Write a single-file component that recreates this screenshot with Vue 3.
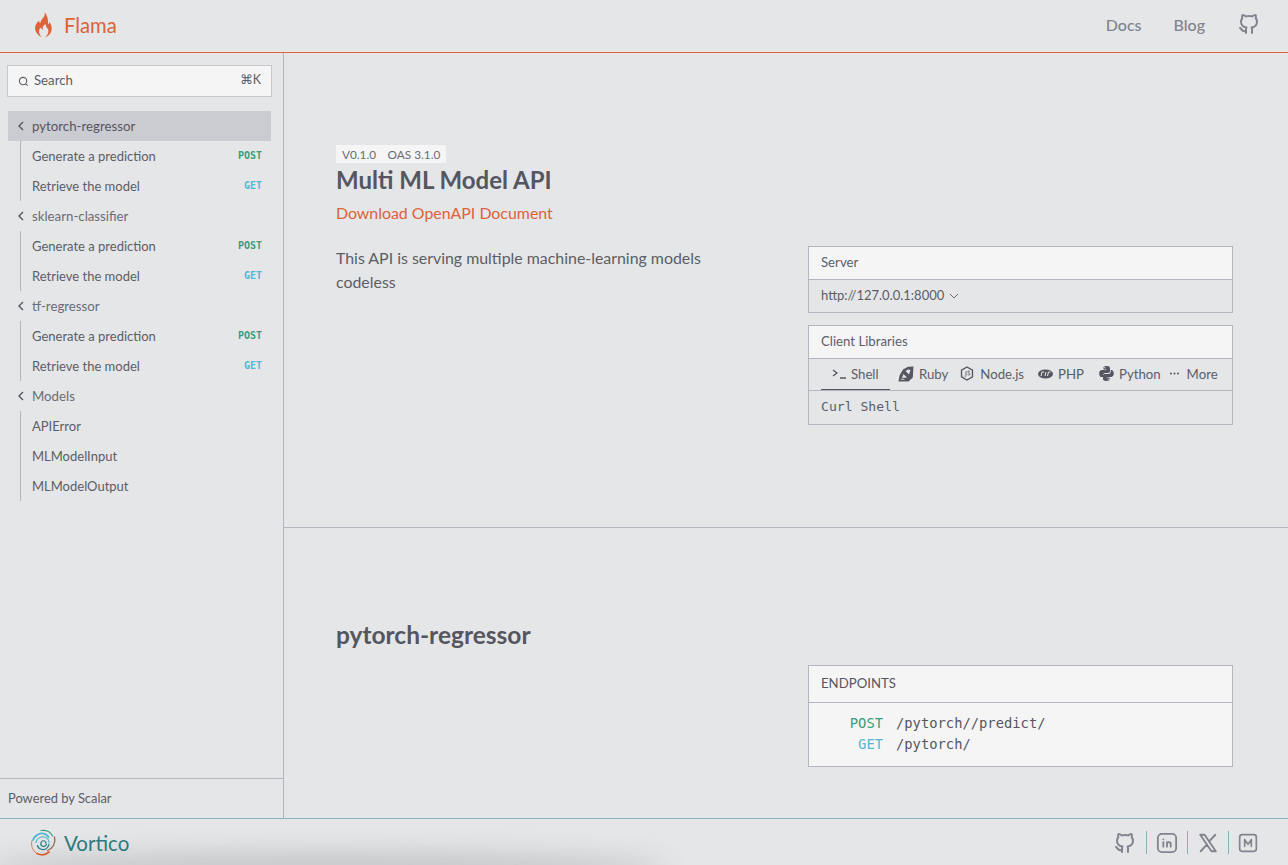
<script setup>
const groups = [
  { name: 'pytorch-regressor', active: true, items: [['Generate a prediction', 'POST'], ['Retrieve the model', 'GET']] },
  { name: 'sklearn-classifier', items: [['Generate a prediction', 'POST'], ['Retrieve the model', 'GET']] },
  { name: 'tf-regressor', items: [['Generate a prediction', 'POST'], ['Retrieve the model', 'GET']] },
  { name: 'Models', items: [['APIError', ''], ['MLModelInput', ''], ['MLModelOutput', '']] },
]
const github = 'M9 19c-4.3 1.4-4.3-2.5-6-3m12 5v-3.5c0-1 .1-1.4-.5-2 2.8-.3 5.5-1.4 5.5-6a4.6 4.6 0 0 0-1.3-3.2 4.2 4.2 0 0 0-.1-3.2s-1.1-.3-3.5 1.3a12.3 12.3 0 0 0-6.2 0C6.5 2.8 5.4 3.1 5.4 3.1a4.2 4.2 0 0 0-.1 3.2A4.6 4.6 0 0 0 4 9.5c0 4.6 2.7 5.7 5.5 6-.6.6-.6 1.2-.5 2V21'
</script>

<template>
  <div class="page">
    <header class="top">
      <div class="brand">
        <svg class="flame" width="20" height="26" viewBox="0 0 20 26">
          <path fill="#dd6237" d="M10.5 0c1 3.2-.6 5-2.3 7C6.800 8.600 6.300 9.800 6.500 11.300 5.400 10.700 5 9.600 5.100 8.400 2.400 10.900.7 13.700 1.100 17c.4 3.600 3 6.300 6.700 8.300-2-2.300-3-4.300-2.700-6.600.2-1.400 1-2.400 2-3.100.1 1.200.7 2 1.600 2.400-.300-2.700.8-4.800 2.800-6.200-.1 2 .9 3.200 1.900 4.500 1.200 1.600 1.400 3.500.4 5.500-.6 1.300-1.500 2.500-2.700 3.600 3.400-1.300 6-3.800 6.500-7.400.4-3-.5-5.500-2.100-7.900-.2 1.100-.7 1.900-1.500 2.500C14.400 8 13.500 3.300 10.500 0z"/>
        </svg>
        <span class="brand-name">Flama</span>
      </div>
      <nav class="top-nav">
        <a>Docs</a>
        <a>Blog</a>
        <svg class="gh" width="24" height="24" viewBox="0 0 24 24"><path :d="github"/></svg>
      </nav>
    </header>

    <div class="body">
      <aside class="side">
        <div class="side-scroll">
          <div class="search">
            <svg width="11" height="11" viewBox="0 0 12 12" class="search-ico"><circle cx="5.500" cy="5.500" r="4"/><path d="M8.500 8.500 10.500 10.500"/></svg>
            <span class="search-label">Search</span>
            <span class="kbd">⌘K</span>
          </div>
          <div class="tree">
            <template v-for="g in groups" :key="g.name">
              <div class="group" :class="{ active: g.active }">
                <svg width="8" height="10" viewBox="0 0 8 10" class="chev"><path d="M6 1 2 5l4 4"/></svg>
                <span>{{ g.name }}</span>
              </div>
              <div class="items">
                <div v-for="it in g.items" :key="it[0]" class="item">
                  <span>{{ it[0] }}</span>
                  <span class="badge" :class="it[1].toLowerCase()">{{ it[1] }}</span>
                </div>
              </div>
            </template>
          </div>
        </div>
        <div class="powered">Powered by Scalar</div>
      </aside>

      <main class="main">
        <section class="intro">
          <div class="tags"><span>V0.1.0</span><span>OAS 3.1.0</span></div>
          <h1>Multi ML Model API</h1>
          <a class="download">Download OpenAPI Document</a>
          <div class="cols top-gap">
            <p class="desc">This API is serving multiple machine-learning models codeless</p>
            <div class="stack">
              <div class="card">
                <div class="card-head">Server</div>
                <div class="card-row">
                  <span>http://127.0.0.1:8000</span>
                  <svg width="10" height="6" viewBox="0 0 10 6" class="down"><path d="M1 1l4 4 4-4"/></svg>
                </div>
              </div>
              <div class="card">
                <div class="card-head">Client Libraries</div>
                <div class="tabs">
                  <div class="tab on">
                    <svg width="16" height="12" viewBox="0 0 16 12"><path class="stroke" d="M1 2l4 3-4 3M8 10h6"/></svg>
                    Shell
                  </div>
                  <div class="tab">
                    <svg width="16" height="16" viewBox="0 0 16 16"><path class="fill" d="M15.500.500 14.800 11.500 10.500 15.500H.500L1.500 9.500 5 3.500 10 .800zM10 3.500 7.500 5 11 8.500 12.500 4zM5.500 8 4 12l5-.5zM2.500 13.500l5 .5-3.500-1.500z"/></svg>
                    Ruby
                  </div>
                  <div class="tab">
                    <svg width="14" height="15" viewBox="0 0 14 15"><path class="stroke" d="M7 1l5.500 3.200v6.600L7 14l-5.500-3.200V4.200z"/><path class="stroke thin" d="M6 5v4.500c0 1-1 1-1.500.7M10 5.500c-1-.7-2.300-.5-2.300.5s2.300.8 2.300 2-1.400 1.300-2.400.6"/></svg>
                    Node.js
                  </div>
                  <div class="tab">
                    <svg width="15" height="10" viewBox="0 0 15 10"><ellipse class="fill" cx="7.500" cy="5" rx="7.500" ry="4.500"/><path d="M3 7l1-4h2M7 7l1-4M9.500 7l1-4h2" stroke="#e5e6e8" stroke-width="1" fill="none"/></svg>
                    PHP
                  </div>
                  <div class="tab">
                    <svg width="15" height="15" viewBox="0 0 15 15"><path class="fill" d="M7.400 0C4.600 0 4.500 1.200 4.500 2v1.500h3v.5H3C1.500 4 .2 5 .2 7.400S1.400 11 2.600 11H4V9.300C4 8 5 7 6.300 7h2.900C10.300 7 11 6.200 11 5V2c0-1.100-1-2-3.600-2zM5.800 1.100a.6.600 0 1 1 0 1.200.6.600 0 0 1 0-1.200z"/><path class="fill" d="M7.600 15c2.800 0 2.900-1.200 2.900-2v-1.500h-3V11H12c1.500 0 2.800-1 2.800-3.400S13.600 4 12.400 4H11.700v1.700C11.700 7 10.700 8 9.400 8H5.800C4.700 8 4 8.800 4 10v3c0 1.100 1 2 3.600 2zm1.600-1.100a.6.600 0 1 1 0-1.200.6.600 0 0 1 0 1.200z"/></svg>
                    Python
                  </div>
                  <div class="tab more">
                    <svg width="9" height="3" viewBox="0 0 9 3"><circle class="fill" cx="1" cy="1.500" r="1"/><circle class="fill" cx="4.500" cy="1.500" r="1"/><circle class="fill" cx="8" cy="1.500" r="1"/></svg>
                    More
                  </div>
                </div>
                <div class="curl">Curl Shell</div>
              </div>
            </div>
          </div>
        </section>

        <section class="tag-section">
          <h2>pytorch-regressor</h2>
          <div class="cols end">
            <div></div>
            <div class="card light">
              <div class="card-head tall">ENDPOINTS</div>
              <div class="endpoints">
                <div class="ep"><span class="verb post">POST</span><span>/pytorch//predict/</span></div>
                <div class="ep"><span class="verb get">GET</span><span>/pytorch/</span></div>
              </div>
            </div>
          </div>
        </section>
      </main>
    </div>

    <footer class="foot">
      <div class="vortico">
        <svg width="28" height="28" viewBox="0 0 28 28" fill="none" stroke-linecap="round">
          <path d="M11 1.500c5-.8 9.500 1.500 11.500 5.500" stroke="#3b9d7d" stroke-width="1.200"/>
          <path d="M24.500 8c1.500 6-1.500 11.500-7 13.500" stroke="#8a6d4c" stroke-width="1.300"/>
          <path d="M19 23c-3.500 3-8 3.500-12 1.500" stroke="#d9622f" stroke-width="1.800"/>
          <path d="M6 24C2 21 .8 16 2 11.500" stroke="#c9805f" stroke-width="1"/>
          <path d="M3 11C4.500 7 9 3.800 13 4.500c2.500.5 4.500 1.700 5.500 3.500" stroke="#48b4d0" stroke-width="1.700"/>
          <path d="M6 13.500C7 9.500 10.500 7.500 14 8c3 .5 5 3 5 6" stroke="#5cb8cc" stroke-width="1.200"/>
          <path d="M19 15.500c-1 3.500-4 5.500-7 5-2.500-.5-4-2-4.500-4" stroke="#2a7d85" stroke-width="1.200"/>
          <path d="M16.500 15.500c-.8 1.500-2.500 2.300-4 1.700-1.500-.7-2-2.300-1.400-3.700.6-1.300 2.200-2 3.500-1.500 1 .4 1.500 1.300 1.300 2.300" stroke="#2a7d85" stroke-width="1.200"/>
        </svg>
        <span>Vortico</span>
      </div>
      <div class="socials">
        <svg width="24" height="24" viewBox="0 0 24 24" class="soc"><path :d="github"/></svg>
        <i></i>
        <svg width="22" height="22" viewBox="0 0 24 24" class="soc"><rect x="2" y="2" width="20" height="20" rx="4.500"/><path d="M8 11v5M8 8v.01M12 16v-5M16 16v-3a2 2 0 0 0-4 0"/></svg>
        <i></i>
        <svg width="22" height="22" viewBox="0 0 24 24" class="soc"><path d="M3.500 3 15.700 21H20.500L8.300 3zM4 21l7-7.500M13 10.500 20 3"/></svg>
        <i></i>
        <svg width="20" height="20" viewBox="0 0 24 24" class="soc"><rect x="2" y="2" width="20" height="20" rx="3"/><path class="m" d="M8 8v8M16 8v8M8 8l4 5.500L16 8"/></svg>
      </div>
    </footer>
  </div>
</template>

<style>
html, body { margin: 0; background: #e5e6e8; overflow: hidden; }
</style>

<style scoped>
.page {
  width: 1288px; height: 865px; display: flex; flex-direction: column;
  background: #e5e6e8; color: #55565f; overflow: hidden;
  font-family: Lato, "Liberation Sans", sans-serif;
}
.top {
  height: 52px; flex: none; box-sizing: content-box; display: flex; align-items: center; justify-content: space-between;
  border-bottom: 1px solid #dd6237; padding: 0 27px 0 34px;
}
.brand { display: flex; align-items: center; gap: 10px; margin-bottom: 3px; }
.flame { display: block; margin-top: 1px; }
.brand-name { color: #dd6237; font-size: 20.200px; }
.top-nav { display: flex; align-items: center; gap: 32px; color: #82838d; font-size: 16px; font-weight: 500; margin-bottom: 4px; }
.gh, .soc { fill: none; stroke: #82838d; stroke-width: 2; stroke-linecap: round; stroke-linejoin: round; }
.body { flex: 1; display: flex; min-height: 0; }
.side {
  width: 283px; flex: none; border-right: 1px solid #b4b5bf;
  display: flex; flex-direction: column;
}
.side-scroll { flex: 1; padding: 12px 11px 0 7px; }
.search {
  height: 32px; width: 265px; box-sizing: border-box; display: flex; align-items: center;
  border: 1px solid #c6c8ce; background: #f5f5f6; padding: 0 10px 3px 10px; font-size: 13.200px; color: #5c5d66;
}
.search-ico { fill: none; stroke: #5c5d66; stroke-width: 1.200; margin-right: 5px; margin-top: 4px; }
.search-label { flex: 1; }
.kbd { font-size: 12.500px; }
.tree { margin: 14px 0 0 1px; width: 263px; font-size: 13.250px; }
.group { height: 30px; display: flex; align-items: center; color: #6b6c75; padding-left: 9px; gap: 7px; }
.group.active { background: #cbccd1; color: #55565f; }
.chev { fill: none; stroke: #55565f; stroke-width: 1.400; }
.items { margin-left: 12px; border-left: 1px solid #b4b5bf; }
.item {
  height: 30px; display: flex; align-items: center; justify-content: space-between;
  padding: 0 9px 0 11px; color: #5c5d66; font-size: 13px;
}
.badge { font-family: "DejaVu Sans Mono", monospace; font-size: 10px; font-weight: 700; margin-bottom: 2px; }
.post { color: #3f9b78; }
.get { color: #55b8d2; }
.powered {
  height: 40px; border-top: 1px solid #b4b5bf; padding: 0 0 2px 8px; box-sizing: border-box; flex: none;
  display: flex; align-items: center; font-size: 12.900px; color: #5c5d66;
}
.main { flex: 1; min-width: 0; }
.intro { height: 475px; box-sizing: border-box; padding: 92px 55px 0 52px; border-bottom: 1px solid #b4b5bf; }
.tags {
  display: inline-flex; gap: 11.500px; background: #f5f5f6; padding: 0 6px; height: 18px; align-items: center;
  font-size: 11.800px; color: #6b6c75; vertical-align: top;
}
h1 { margin: 1px 0 0; font-size: 24px; line-height: 30px; font-weight: 700; color: #55565f; }
.download { display: block; margin-top: 7px; font-size: 15.900px; line-height: 22px; color: #dd6237; }
.cols { display: grid; grid-template-columns: 1fr 425px; column-gap: 48px; }
.top-gap { margin-top: 22px; }
.desc { margin: 0; font-size: 15.900px; line-height: 24px; color: #5c5d66; }
.stack { display: flex; flex-direction: column; gap: 12px; }
.card { border: 1px solid #b4b5bf; font-size: 13.200px; }
.card-head {
  height: 32px; box-sizing: border-box; background: #f5f5f6; display: flex; align-items: center; padding: 0 0 2px 12px;
  box-shadow: 0 1px 0 #b4b5bf; margin-bottom: 1px; color: #5c5d66;
}
.card-row { height: 32px; display: flex; align-items: center; gap: 5px; padding: 0 0 2px 12px; box-sizing: border-box; color: #5c5d66; font-size: 13px; }
.down { fill: none; stroke: #6b6c75; stroke-width: 1; margin-top: 2px; }
.tabs { height: 31px; display: flex; padding-left: 12px; border-bottom: 1px solid #b4b5bf; }
.tab { display: flex; align-items: center; gap: 5px; padding: 0 12px 2px 0; color: #5c5d66; white-space: nowrap; }
.tab.on { width: 69px; box-sizing: border-box; padding: 0 0 2px 11px; margin-right: 8px; box-shadow: inset 0 -1px 0 #55565f; gap: 3px; }
.tab:nth-child(3) { padding-right: 14px; gap: 6px; }
.tab:nth-child(4) { padding-right: 15px; }
.tab:nth-child(5) { padding-right: 9px; }
.tab.more { padding-right: 0; gap: 8px; }
.fill { fill: #55565f; fill-rule: evenodd; }
.stroke { fill: none; stroke: #55565f; stroke-width: 1.300; }
.stroke.thin { stroke-width: .8; }
.curl { height: 33px; box-sizing: border-box; padding: 0 0 2px 12px; display: flex; align-items: center; font-family: "DejaVu Sans Mono", monospace; font-size: 13.100px; color: #5c5d66; }
.tag-section { padding: 90px 55px 0 52px; }
h2 { margin: 0; font-size: 24.500px; line-height: 34px; font-weight: 700; color: #55565f; }
.end { margin-top: 13px; }
.light { background: #f5f5f6; }
.tall { height: 36px; padding-bottom: 2px; font-size: 13.200px; color: #55565f; }
.endpoints { padding: 10px 0 11px; font-family: "DejaVu Sans Mono", monospace; font-size: 13.800px; line-height: 21px; }
.ep { display: flex; gap: 13px; }
.verb { width: 74px; text-align: right; }
.foot {
  height: 46px; flex: none; border-top: 1px solid #86b3b8; display: flex; align-items: center;
  justify-content: space-between; padding: 0 30px 0 30px; position: relative; overflow: hidden;
}
.foot::after {
  content: ""; position: absolute; left: -10px; width: 670px; bottom: -16px; height: 16px;
  box-shadow: 0 -4px 26px 8px rgba(90, 92, 95, .24); border-radius: 50%;
}
.vortico { display: flex; align-items: center; gap: 6px; color: #2d7a7e; font-size: 20.500px; position: relative; z-index: 1; margin-top: 2px; }
.socials { display: flex; align-items: center; gap: 9px; margin-top: 1px; }
.socials i { width: 1px; height: 23px; background: #86b3b8; }
.m { stroke-width: 2; }
</style>
